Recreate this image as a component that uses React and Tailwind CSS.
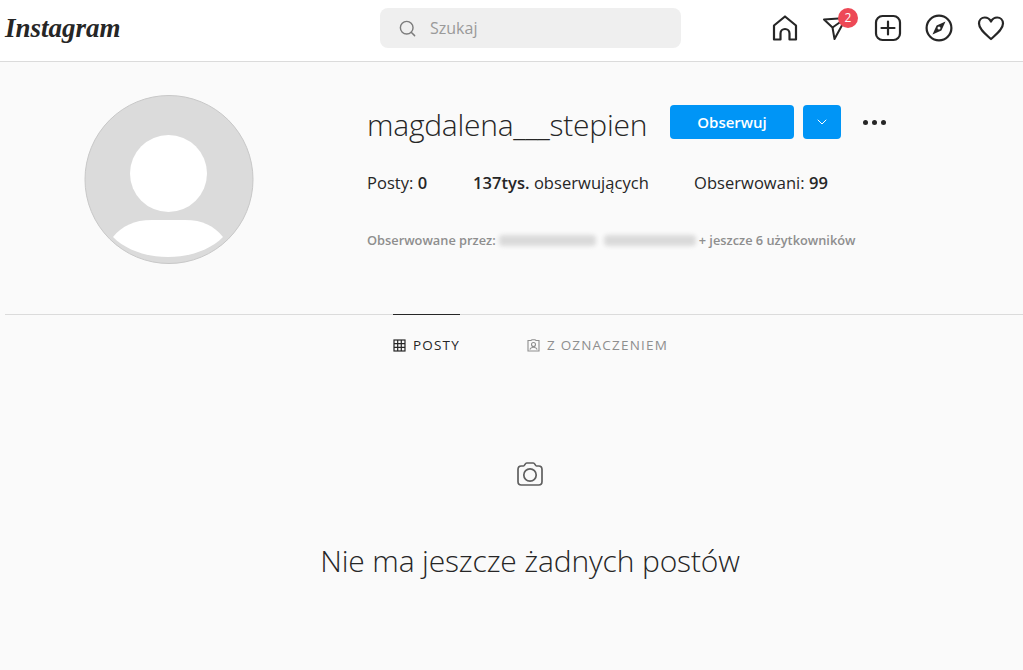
import React from 'react';
import { Search, ChevronDown } from 'lucide-react';

const Home = () => (
  <svg width="28" height="28" viewBox="0 0 28 28" fill="none" stroke="#262626" strokeWidth="2.2" strokeLinejoin="round">
    <path d="M3 25.5V11.5L14 2.5L25 11.5V25.5H18.5V19.5a4.5 4.5 0 0 0-9 0V25.5Z" />
  </svg>
);

const Direct = () => (
  <svg width="26" height="26" viewBox="0 0 26 26" fill="none" stroke="#262626" strokeWidth="2" strokeLinejoin="round">
    <path d="M2 4.5L24 3L12.5 24L10.5 12.5Z" />
    <path d="M10.5 12.5L24 3" />
  </svg>
);

const Plus = () => (
  <svg width="28" height="28" viewBox="0 0 28 28" fill="none" stroke="#262626" strokeWidth="2.2" strokeLinecap="round">
    <rect x="2" y="2" width="24" height="24" rx="6.5" />
    <path d="M14 7.5V20.5M7.5 14H20.5" />
  </svg>
);

const Compass = () => (
  <svg width="28" height="28" viewBox="0 0 28 28" fill="none" stroke="#262626" strokeWidth="2.2">
    <circle cx="14" cy="14" r="12.4" />
    <path d="M20.5 7.5L16.4 16.4L7.5 20.5L11.6 11.6Z" fill="#262626" stroke="none" />
    <circle cx="14" cy="14" r="1.5" fill="#fff" stroke="none" />
  </svg>
);

const Heart = () => (
  <svg width="28" height="26" viewBox="0 0 28 26" fill="none" stroke="#262626" strokeWidth="2.2" strokeLinejoin="round">
    <path d="M14 24C9 19.5 2 14.5 2 8.5C2 5 4.6 2.5 7.8 2.5C10.5 2.5 12.7 4 14 6.5C15.3 4 17.5 2.5 20.2 2.5C23.4 2.5 26 5 26 8.5C26 14.5 19 19.5 14 24Z" />
  </svg>
);

const Avatar = () => (
  <svg width="170" height="170" viewBox="0 0 170 170" className="shrink-0">
    <circle cx="85" cy="84.5" r="84" fill="#dbdbdb" stroke="#c8c8c8" strokeWidth="1" />
    <circle cx="84.5" cy="78.5" r="38.5" fill="#fff" />
    <path d="M29 142C38 131 50 125 68 125H101C119 125 130 131 139 142C126 155 106 162 84 162C62 162 42 155 29 142Z" fill="#fff" />
  </svg>
);

const GridIcon = () => (
  <svg width="13" height="13" viewBox="0 0 13 13" fill="none" stroke="#262626" strokeWidth="1.2">
    <rect x="1" y="1" width="11" height="11" />
    <path d="M4.7 1V12M8.3 1V12M1 4.7H12M1 8.3H12" />
  </svg>
);

const TagIcon = () => (
  <svg width="13" height="13" viewBox="0 0 13 13" fill="none" stroke="#8e8e8e" strokeWidth="1.1">
    <path d="M4 1.5H1V12H12V1.5H9" />
    <path d="M4 1.5L5 .7H8L9 1.5" />
    <circle cx="6.5" cy="5.5" r="2" />
    <path d="M2.8 10.5C3.5 8.7 5 8.3 6.5 8.3C8 8.3 9.5 8.7 10.2 10.5" />
  </svg>
);

const Camera = () => (
  <svg width="28" height="26" viewBox="0 0 28 26" fill="none" stroke="#5f5f5f" strokeWidth="1.7" strokeLinejoin="round">
    <path d="M2 8.5C2 6.5 3.3 5 5.3 5H7.5C8.8 5 9 2 10.8 2H17.2C19 2 19.2 5 20.5 5H22.7C24.7 5 26 6.5 26 8.5V20.5C26 22.8 24.7 24 22.7 24H5.3C3.3 24 2 22.8 2 20.5Z" />
    <circle cx="14" cy="14" r="6.2" />
  </svg>
);

const App = () => (
  <div className="min-h-[670px] bg-[#fafafa] font-['Open_Sans','Noto_Sans',sans-serif] text-[#262626] overflow-hidden">
    {/* Header */}
    <header className="h-[62px] bg-white border-b border-[#dbdbdb] flex items-center">
      <div className="w-[380px] pl-[5px] pb-[4px]">
        <span className="font-['Liberation_Serif',serif] italic font-bold text-[27px] leading-none text-[#262626]">
          Instagram
        </span>
      </div>
      <div className="w-[301px] h-[40px] mb-[5px] rounded-lg bg-[#efefef] flex items-center pl-[18px]">
        <Search size={19} strokeWidth={1.8} className="text-[#7c7c7c]" />
        <span className="ml-[13px] text-[16px] text-[#9a9a9a]">Szukaj</span>
      </div>
      <nav className="flex items-center ml-[90px] mb-[6px]">
        <div className="w-[28px] flex justify-center"><Home /></div>
        <div className="relative w-[26px] ml-[23px] flex justify-center">
          <Direct />
          <span className="absolute left-[16px] top-[-7px] w-[20px] h-[20px] rounded-full bg-[#ed4956] text-white text-[12px] leading-[20px] text-center">2</span>
        </div>
        <div className="w-[28px] ml-[26px] flex justify-center"><Plus /></div>
        <div className="w-[28px] ml-[23px] flex justify-center"><Compass /></div>
        <div className="w-[28px] ml-[24px] flex justify-center"><Heart /></div>
      </nav>
    </header>

    {/* Profile */}
    <section className="flex pl-[79px] pt-[33px] h-[253px] border-b border-[#dbdbdb] ml-[5px]">
      <Avatar />
      <div className="ml-[113px]">
        <div className="flex items-center h-[44px] mt-[5px]">
          <h1 className="mt-[6px] font-light text-[30px] leading-[40px] tracking-[-0.25px] text-[#262626] w-[303px] whitespace-nowrap">magdalena___stepien</h1>
          <button className="w-[124px] h-[34px] rounded bg-[#0095f6] text-white text-[15px] font-semibold">Obserwuj</button>
          <button className="w-[38px] h-[34px] ml-[9px] rounded bg-[#0095f6] text-white flex items-center justify-center">
            <ChevronDown size={16} strokeWidth={1.5} />
          </button>
          <div className="flex gap-[4px] ml-[22px]">
            <span className="w-[5px] h-[5px] rounded-full bg-[#262626]"></span>
            <span className="w-[5px] h-[5px] rounded-full bg-[#262626]"></span>
            <span className="w-[5px] h-[5px] rounded-full bg-[#262626]"></span>
          </div>
        </div>
        <div className="flex mt-[27px] text-[16.5px] leading-[24px] tracking-[0.05px] whitespace-nowrap">
          <span className="w-[106px]">Posty: <b className="font-semibold">0</b></span>
          <span className="w-[221px]"><b className="font-semibold">137tys.</b> obserwujących</span>
          <span>Obserwowani: <b className="font-semibold">99</b></span>
        </div>
        <div className="flex items-center mt-[36px] text-[12.8px] leading-[18px] font-semibold text-[#8e8e8e] whitespace-nowrap">
          <span>Obserwowane przez:</span>
          <span className="ml-[3px] w-[97px] h-[11px] rounded-sm bg-[#dadada] blur-[2px]"></span>
          <span className="ml-[8px] w-[92px] h-[11px] rounded-sm bg-[#dadada] blur-[2px]"></span>
          <span className="ml-[3px]">+ jeszcze 6 użytkowników</span>
        </div>
      </div>
    </section>

    {/* Tabs */}
    <div className="flex pl-[393px] -mt-px">
      <div className="w-[67px] h-[52px] pt-[10px] border-t border-[#262626] flex items-center gap-[7px] text-[13.5px] font-medium tracking-[1.2px] whitespace-nowrap">
        <GridIcon />
        <span>POSTY</span>
      </div>
      <div className="ml-[67px] h-[52px] pt-[10px] flex items-center gap-[7px] text-[13.5px] font-medium tracking-[1.2px] text-[#8e8e8e] whitespace-nowrap">
        <TagIcon />
        <span>Z OZNACZENIEM</span>
      </div>
    </div>

    {/* Empty state */}
    <div className="flex flex-col items-center w-[1060px] mt-[95px]">
      <Camera />
      <h2 className="mt-[54px] font-light text-[30px] leading-[40px] tracking-[-0.15px] text-[#262626]">Nie ma jeszcze żadnych postów</h2>
    </div>
  </div>
);

export default App;
